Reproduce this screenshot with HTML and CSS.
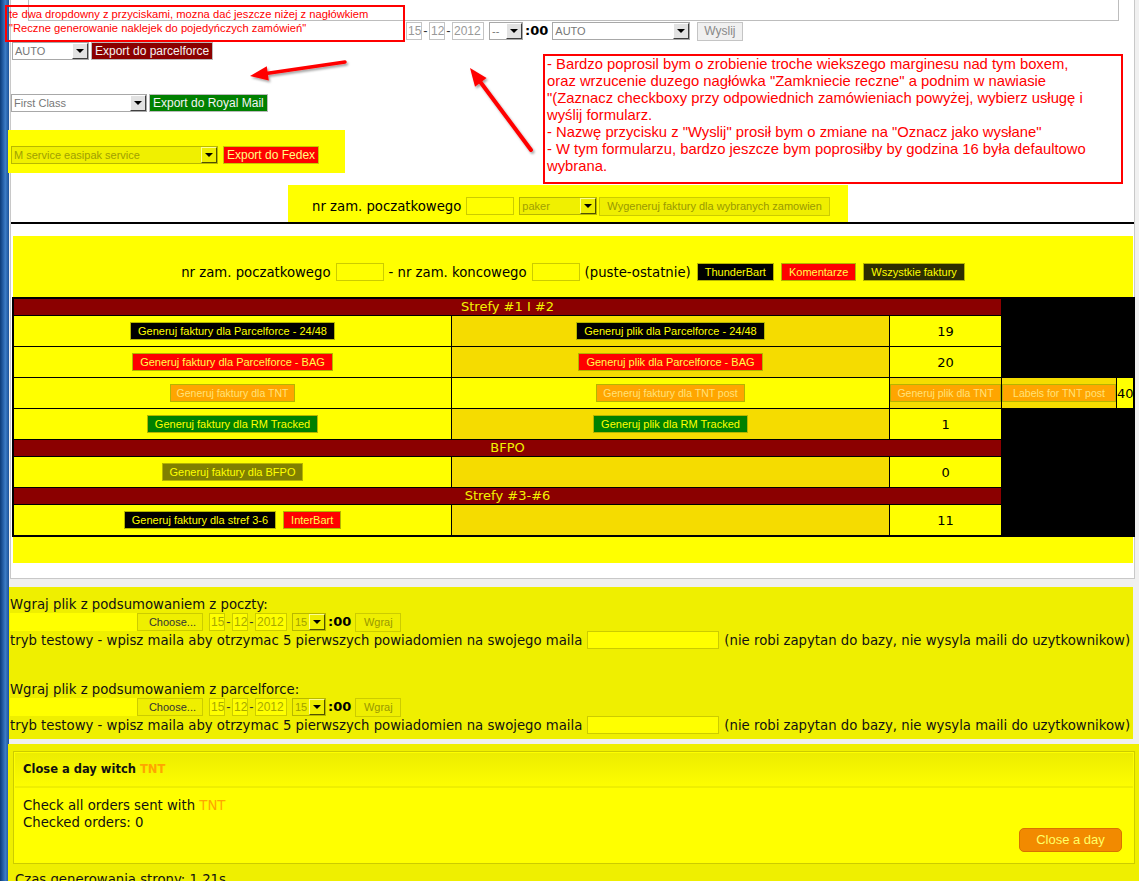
FILE: index.html
```html
<!DOCTYPE html>
<html lang="pl">
<head>
<meta charset="utf-8">
<title>Zamówienia – panel</title>
<link rel="stylesheet" href="styles.css">
</head>
<body>
<div class="edge"></div>
<main class="page">
  <section class="panel">
    <div class="textarea"></div>

    <div class="row row-date">
      <span class="inp w16">15</span><span class="dash">-</span><span class="inp w16">12</span><span class="dash">-</span><span class="inp w32">2012</span>
      <span class="sel w34 ml5"><span class="sel-text">--</span><span class="sel-btn"></span></span>
      <b class="clock">:00</b>
      <span class="sel w138 ml4"><span class="sel-text">AUTO</span><span class="sel-btn"></span></span>
      <span class="btn btn-grey ml7">Wyslij</span>
    </div>

    <div class="row row-pf">
      <span class="sel w77"><span class="sel-text">AUTO</span><span class="sel-btn"></span></span>
      <span class="btn btn-x b-darkred ml2">Export do parcelforce</span>
    </div>

    <div class="row row-rm">
      <span class="sel w136"><span class="sel-text">First Class</span><span class="sel-btn"></span></span>
      <span class="btn btn-x b-green ml2">Export do Royal Mail</span>
    </div>

    <div class="fedex">
      <div class="row">
        <span class="sel ysel w207"><span class="sel-text">M service easipak service</span><span class="sel-btn"></span></span>
        <span class="btn btn-x b-red fedex-btn ml5">Export do Fedex</span>
      </div>
    </div>

    <div class="range">
      <div class="row">
        <span class="label">nr zam. poczatkowego</span>
        <span class="inp yinp w48 ml5"></span>
        <span class="sel ysel w78 ml5"><span class="sel-text">paker</span><span class="sel-btn"></span></span>
        <span class="btn btn-y ml2">Wygeneruj faktury dla wybranych zamowien</span>
      </div>
    </div>

    <div class="divider"></div>

    <div class="invoices">
      <div class="filter">
        <span class="label">nr zam. poczatkowego</span>
        <span class="inp yinp w48 ml5"></span>
        <span class="label ml5">- nr zam. koncowego</span>
        <span class="inp yinp w48 ml5"></span>
        <span class="label ml5">(puste-ostatnie)</span>
        <span class="btn b-black ml6">ThunderBart</span>
        <span class="btn b-red ml7">Komentarze</span>
        <span class="btn b-dark ml7">Wszystkie faktury</span>
      </div>

      <table class="zones">
        <colgroup><col class="c1"><col class="c2"><col class="c3"><col class="c4"><col class="c5"></colgroup>
        <tr><th colspan="3">Strefy #1 I #2</th></tr>
        <tr>
          <td class="y"><span class="btn b-black">Generuj faktury dla Parcelforce - 24/48</span></td>
          <td class="g"><span class="btn b-black">Generuj plik dla Parcelforce - 24/48</span></td>
          <td class="y num">19</td>
        </tr>
        <tr>
          <td class="y"><span class="btn b-red">Generuj faktury dla Parcelforce - BAG</span></td>
          <td class="g"><span class="btn b-red">Generuj plik dla Parcelforce - BAG</span></td>
          <td class="y num">20</td>
        </tr>
        <tr>
          <td class="y"><span class="btn b-orange">Generuj faktury dla TNT</span></td>
          <td class="y"><span class="btn b-orange">Generuj faktury dla TNT post</span></td>
          <td class="g tight"><span class="btn b-orange">Generuj plik dla TNT</span></td>
          <td class="g tight"><span class="btn b-orange">Labels for TNT post</span></td>
          <td class="y num">40</td>
        </tr>
        <tr>
          <td class="y"><span class="btn b-green">Generuj faktury dla RM Tracked</span></td>
          <td class="g"><span class="btn b-green">Generuj plik dla RM Tracked</span></td>
          <td class="y num">1</td>
        </tr>
        <tr><th colspan="3">BFPO</th></tr>
        <tr>
          <td class="y"><span class="btn b-olive">Generuj faktury dla BFPO</span></td>
          <td class="g"></td>
          <td class="y num">0</td>
        </tr>
        <tr><th colspan="3">Strefy #3-#6</th></tr>
        <tr>
          <td class="y"><span class="btn b-black">Generuj faktury dla stref 3-6</span><span class="btn b-red ml7">InterBart</span></td>
          <td class="g"></td>
          <td class="y num">11</td>
        </tr>
      </table>
    </div>
  </section>

  <section class="upload">
    <div class="up-block">
      <div class="up-label">Wgraj plik z podsumowaniem z poczty:</div>
      <div class="row">
        <span class="file-field"></span><span class="btn btn-choose">Choose...</span>
        <span class="inp yinp w16 ml6">15</span><span class="dash">-</span><span class="inp yinp w16">12</span><span class="dash">-</span><span class="inp yinp w32">2012</span>
        <span class="sel ysel w34 ml5"><span class="sel-text">15</span><span class="sel-btn"></span></span>
        <b class="clock">:00</b>
        <span class="btn btn-y btn-wgraj ml4">Wgraj</span>
      </div>
      <div class="row up-test">
        <span>tryb testowy - wpisz maila aby otrzymac 5 pierwszych powiadomien na swojego maila</span>
        <span class="inp yinp w132 mx5"></span>
        <span>(nie robi zapytan do bazy, nie wysyla maili do uzytkownikow)</span>
      </div>
    </div>
    <div class="up-block">
      <div class="up-label">Wgraj plik z podsumowaniem z parcelforce:</div>
      <div class="row">
        <span class="file-field"></span><span class="btn btn-choose">Choose...</span>
        <span class="inp yinp w16 ml6">15</span><span class="dash">-</span><span class="inp yinp w16">12</span><span class="dash">-</span><span class="inp yinp w32">2012</span>
        <span class="sel ysel w34 ml5"><span class="sel-text">15</span><span class="sel-btn"></span></span>
        <b class="clock">:00</b>
        <span class="btn btn-y btn-wgraj ml4">Wgraj</span>
      </div>
      <div class="row up-test">
        <span>tryb testowy - wpisz maila aby otrzymac 5 pierwszych powiadomien na swojego maila</span>
        <span class="inp yinp w132 mx5"></span>
        <span>(nie robi zapytan do bazy, nie wysyla maili do uzytkownikow)</span>
      </div>
    </div>
  </section>

  <section class="closing">
    <div class="day-box">
      <div class="day-head">Close a day witch&nbsp;<span class="tnt">TNT</span></div>
      <div class="day-body">
        <div>Check all orders sent with <span class="tnt">TNT</span></div>
        <div>Checked orders: 0</div>
        <div class="day-actions"><span class="btn-close">Close a day</span></div>
      </div>
    </div>
    <div class="gen-time">Czas generowania strony: 1.21s</div>
  </section>
</main>

<div class="note note1">te dwa dropdowny z przyciskami, mozna dać jeszcze niżej z nagłówkiem<br>"Reczne generowanie naklejek do pojedyńczych zamówień"</div>
<div class="note note2">- Bardzo poprosil bym o zrobienie troche wiekszego marginesu nad tym boxem,<br>oraz wrzucenie duzego nagłówka "Zamkniecie reczne" a podnim w nawiasie<br>"(Zaznacz checkboxy przy odpowiednich zamówieniach powyżej, wybierz usługę i<br>wyślij formularz.<br>- Nazwę przycisku z "Wyslij" prosił bym o zmiane na "Oznacz jako wysłane"<br>- W tym formularzu, bardzo jeszcze bym poprosiłby by godzina 16 była defaultowo<br>wybrana.</div>

<svg class="arrows" width="600" height="170" viewBox="0 0 600 170" aria-hidden="true">
  <defs>
    <filter id="sh" x="-30%" y="-30%" width="160%" height="160%">
      <feDropShadow dx="1.5" dy="2" stdDeviation="1.2" flood-color="#000" flood-opacity="0.35"/>
    </filter>
  </defs>
  <g filter="url(#sh)" fill="#f00" stroke="#f00">
    <line x1="345" y1="62" x2="266" y2="73.6" stroke-width="3.5" stroke-linecap="round"/>
    <polygon points="250,76 266.8,66.3 268.8,80.5" stroke="none"/>
    <line x1="531" y1="150" x2="480" y2="81.5" stroke-width="4" stroke-linecap="round"/>
    <polygon points="470,68 486.6,78.1 475,86.8" stroke="none"/>
  </g>
</svg>
</body>
</html>
```

FILE: styles.css
```css
* { box-sizing: border-box; }
html { overflow: hidden; }
html, body { margin: 0; padding: 0; }
body {
  position: relative;
  display: flex;
  align-items: flex-start;
  width: 1139px;
  min-height: 881px;
  background: #f0f0f0;
  font: 13.25px/17px "DejaVu Sans", Verdana, sans-serif;
  color: #111;
}

.edge {
  flex: none;
  width: 9px;
  align-self: stretch;
  background: linear-gradient(90deg, #0c3a76 0, #2660a8 35%, #3c7cc5 60%, #1c5299 100%);
}
.page { flex: none; width: 1130px; }

/* generic */
.row { display: flex; align-items: center; height: 18px; }
.ml2 { margin-left: 2px; }
.ml4 { margin-left: 4px; }
.ml5 { margin-left: 5px; }
.ml6 { margin-left: 6px; }
.ml7 { margin-left: 7px; }
.mx5 { margin: 0 5px; }
.w16 { width: 16px; }
.w32 { width: 32px; }
.w34 { width: 34px; }
.w48 { width: 48px; }
.w77 { width: 77px; }
.w78 { width: 78px; }
.w132 { width: 132px; }
.w136 { width: 136px; }
.w138 { width: 138px; }
.w207 { width: 207px; }

.label { white-space: nowrap; }

.inp {
  display: inline-block;
  flex: none;
  height: 18px;
  padding: 0 1px;
  border: 1px solid #c4c4c4;
  background: #fff;
  font: 12px/16px "Liberation Sans", Arial, sans-serif;
  color: #999;
  overflow: hidden;
}
.yinp { background: #ff0; border-color: #cccc00; color: #a8a800; }
.dash { width: 7px; text-align: center; font: 13px/16px "Liberation Sans", Arial, sans-serif; color: #333; }
.clock { margin-left: 2px; font: bold 13px/16px "DejaVu Sans", Verdana, sans-serif; color: #000; }

.sel {
  display: inline-flex;
  flex: none;
  height: 18px;
  border: 1px solid #a8a8a8;
  background: #fff;
  color: #777;
  font: 11px/16px "Liberation Sans", Arial, sans-serif;
}
.sel-text { flex: 1; min-width: 0; padding-left: 2px; white-space: nowrap; overflow: hidden; }
.sel-btn {
  position: relative;
  flex: none;
  width: 16px;
  height: 16px;
  background: #e2e2e2;
  border: 1px solid;
  border-color: #fff #404040 #404040 #fff;
}
.sel-btn::after {
  content: "";
  position: absolute;
  left: 3px;
  top: 5px;
  border-left: 4px solid transparent;
  border-right: 4px solid transparent;
  border-top: 4px solid #000;
}
.ysel { background: #f0f000; border-color: #b8b800; color: #a0a000; }
.ysel .sel-btn { background: #eeee00; border-color: #ffff90 #505000 #505000 #ffff90; }

.btn {
  display: inline-block;
  flex: none;
  height: 18px;
  padding: 0 7px;
  border: 1px solid #b5b500;
  font: 11px/16px "Liberation Sans", Arial, sans-serif;
  color: #ff0;
  white-space: nowrap;
  vertical-align: middle;
}
.b-black { background: #000; }
.b-red { background: #f00; color: #ffff4d; }
.b-orange { background: #ffa500; color: #ffe27a; font-size: 10.5px; padding: 0 6px; }
.b-green { background: #008000; }
.b-olive { background: #808000; }
.b-dark { background: #2e2e00; }
.b-darkred { background: #8b0000; }
.btn-x { font-size: 12px; padding: 0 3px; border-color: #bbb; color: #f4f4f4; }
.fedex-btn { color: #ffff80; border-color: #c8c800; }
.btn-grey {
  height: 19px;
  padding: 0 6px;
  background: #f0f0f0;
  border-color: #c4c4c4;
  color: #888;
  font-size: 12px;
}
.btn-y { height: 19px; background: #efef00; border-color: #cccc00; color: #999900; }

/* white panel */
.panel {
  margin-left: 1px;
  width: 1125px;
  background: #fff;
  border: 1px solid #c8c8c8;
  border-top: 0;
  padding-bottom: 15px;
}
.textarea {
  margin-left: 17px;
  width: 1091px;
  height: 21px;
  border: 1px solid #bdbdbd;
  border-top: 0;
}
.row-date { margin-top: 1px; padding-left: 395px; }
.row-pf { margin-top: 2px; padding-left: 1px; }
.row-rm { margin-top: 34px; }

.fedex {
  margin: 18px 0 0 -3px;
  width: 337px;
  height: 43px;
  padding: 16px 0 0 3px;
  background: #ff0;
}

.range {
  margin: 12px 0 0 277px;
  width: 560px;
  height: 37px;
  padding: 12px 0 0 24px;
  background: #ff0;
  color: #000;
}

.divider { height: 2px; background: #000; }

.invoices {
  margin: 12px 0 0 2px;
  width: 1120px;
  padding: 27px 0 26px;
  background: #ff0;
  color: #000;
}
.filter {
  display: flex;
  justify-content: center;
  align-items: center;
  height: 18px;
  margin-bottom: 16px;
}

.zones {
  margin-left: -1px;
  width: 1123px;
  table-layout: fixed;
  border-collapse: separate;
  border-spacing: 1px;
  border: 1px solid #000;
  background: #000;
}
.c1, .c2 { width: 437px; }
.c3 { width: 111px; }
.c4 { width: 114px; }
.c5 { width: 16px; }
.zones th {
  height: 16px;
  padding: 0;
  background: #8b0000;
  color: #f2f200;
  font: normal 13px/16px "DejaVu Sans", Verdana, sans-serif;
}
.zones td {
  height: 30px;
  padding: 0;
  text-align: center;
  vertical-align: middle;
  white-space: nowrap;
}
.y { background: #ff0; }
.g { background: #f5dc00; }
.num { font-size: 13px; color: #000; }
.tight .btn { display: block; width: 100%; padding: 0 2px; }

/* upload */
.upload {
  margin-top: 8px;
  width: 1124px;
  height: 152px;
  padding: 9px 0 0 1px;
  background: #efef00;
}
.up-block + .up-block { margin-top: 32px; }
.up-label { height: 17px; white-space: nowrap; }
.up-test { white-space: nowrap; }
.file-field { flex: none; width: 127px; height: 18px; background: #ff0; }
.btn-choose {
  width: 66px;
  padding: 0 6px;
  text-align: right;
  background: #efef00;
  border-color: #cccc00;
  color: #333;
}
.btn-wgraj { width: 46px; text-align: center; padding: 0; }

/* closing */
.closing {
  margin: 5px 0 0 -1px;
  width: 1131px;
  height: 200px;
  padding: 7px 4px 0 5px;
  background: #efef00;
}
.day-box { border: 1px solid #cccc00; padding: 1px; background: #ff0; }
.day-head {
  display: flex;
  align-items: center;
  height: 35px;
  padding-left: 8px;
  border-bottom: 2px solid #efef00;
  background: linear-gradient(#eded00, #fdfd00);
  font-weight: bold;
  font-size: 11.5px;
  color: #111;
}
.day-body { padding: 9px 11px 10px 8px; }
.day-actions { display: flex; justify-content: flex-end; margin-top: -3px; }
.btn-close {
  display: inline-block;
  width: 103px;
  height: 24px;
  border: 1px solid #d87200;
  border-radius: 5px;
  background: #f28a00;
  color: #ffff66;
  font: 13px/22px "Liberation Sans", Arial, sans-serif;
  text-align: center;
}
.tnt { color: #ffa500; font-weight: inherit; }
.gen-time { margin-top: 7px; padding-left: 2px; white-space: nowrap; }

/* annotations laid over the page */
.note {
  position: absolute;
  border: 2px solid #f00;
  color: #f00;
  font-family: "Liberation Sans", Arial, sans-serif;
  white-space: nowrap;
}
.note1 {
  left: 5px;
  top: 5px;
  width: 400px;
  height: 37px;
  padding-left: 2px;
  font-size: 11.2px;
  line-height: 14px;
}
.note2 {
  left: 543px;
  top: 54px;
  width: 580px;
  height: 130px;
  padding-left: 2px;
  background: #fff;
  font-size: 14.8px;
  line-height: 17px;
}
.arrows {
  position: absolute;
  left: 0;
  top: 0;
  pointer-events: none;
}
```
